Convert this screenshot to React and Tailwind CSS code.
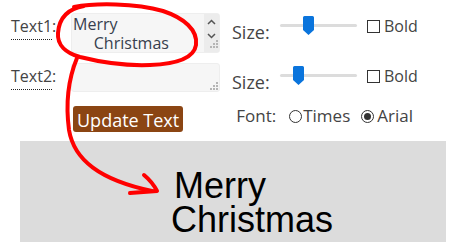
const Grip = () => (
  <svg width="8" height="8" viewBox="0 0 8 8" className="block">
    {[
      [6, 0],
      [3, 3],
      [6, 3],
      [0, 6],
      [3, 6],
      [6, 6],
    ].map(([x, y], i) => (
      <rect key={i} x={x} y={y} width="2" height="2" fill="#b5b5b5" />
    ))}
  </svg>
);

const Slider = ({ pos }) => (
  <div className="relative mt-[3px] h-[19px] w-[77px]">
    <div className="absolute left-0 right-0 top-[8px] h-[3px] rounded-full bg-[#dcdcdc]" />
    <svg
      width="11"
      height="19"
      viewBox="0 0 11 19"
      className="absolute top-0"
      style={{ left: pos }}
    >
      <path d="M1.5 0h8a1.5 1.5 0 0 1 1.5 1.5V14l-5.5 5L0 14V1.5A1.5 1.5 0 0 1 1.5 0z" fill="#0a74dc" />
    </svg>
  </div>
);

const Checkbox = () => (
  <div className="mt-[2px] ml-[10px] flex items-center leading-[22px] text-[16px]">
    <span className="h-[13px] w-[13px] border border-[#333] bg-white" />
    <span className="ml-[4px]">Bold</span>
  </div>
);

const Label = ({ children }) => (
  <div className="mt-[2px] w-[60px] ml-[11px] text-[16px] leading-[22px]">
    <span className="inline-block border-b border-dotted border-[#222] pb-[2px] leading-[22px]">{children}</span>:
  </div>
);

const Radio = ({ checked }) => (
  <span className="flex h-[13px] w-[13px] items-center justify-center rounded-full border border-[#333] bg-white">
    {checked && <span className="h-[7px] w-[7px] rounded-full bg-[#333]" />}
  </span>
);

export default function App() {
  return (
    <div className="relative h-[242px] w-[470px] overflow-hidden bg-white font-['Open_Sans',sans-serif] text-[#444]">
      <div className="flex h-[63px] items-start pt-[13px]">
        <Label>Text1</Label>
        <div className="flex h-[40px] w-[149px] rounded-[3px] border border-[#eeeeee] bg-[#f6f6f6]">
          <textarea
            readOnly
            value={"Merry\n     Christmas"}
            className="h-full flex-1 resize-none overflow-hidden bg-transparent pl-[1px] pt-[1px] text-[16px] leading-[19px] text-[#37404e] outline-none"
          />
          <div className="flex w-[15px] flex-col items-center bg-[#ececec] pt-[5px] text-[#555]">
            <svg width="9" height="6" viewBox="0 0 9 6">
              <path d="M1 5l3.5-3.5L8 5" fill="none" stroke="#555" strokeWidth="1.5" />
            </svg>
            <svg width="9" height="6" viewBox="0 0 9 6" className="mt-[8px]">
              <path d="M1 1l3.5 3.5L8 1" fill="none" stroke="#555" strokeWidth="1.5" />
            </svg>
            <div className="mt-[1px] self-end pr-[1px]">
              <Grip />
            </div>
          </div>
        </div>
        <div className="ml-[12px] mt-[7px] w-[48px] text-[18px] leading-[24px]">Size:</div>
        <Slider pos={23} />
        <Checkbox />
      </div>

      <div className="flex h-[41px] items-start">
        <Label>Text2</Label>
        <div className="flex h-[29px] w-[149px] items-end justify-end rounded-[3px] border border-[#eeeeee] bg-[#f6f6f6] p-[1px]">
          <Grip />
        </div>
        <div className="ml-[12px] mt-[7px] w-[48px] text-[18px] leading-[24px]">Size:</div>
        <Slider pos={13} />
        <Checkbox />
      </div>

      <div className="flex h-[37px] items-start">
        <button className="ml-[73px] mt-[2px] flex h-[26px] items-center rounded-[3px] bg-[#8b4513] px-[4px] pt-[2px] text-[18px] leading-[24px] text-white">
          Update Text
        </button>
        <div className="ml-[53px] flex items-center text-[17px] leading-[24px]">
          <span className="w-[53px]">Font:</span>
          <Radio />
          <span className="ml-[1px]">Times</span>
          <span className="ml-[11px]">
            <Radio checked />
          </span>
          <span className="ml-[3px]">Arial</span>
        </div>
      </div>

      <div className="ml-[20px] h-[101px] w-[426px] bg-[#dcdcdc] pl-[151px] pt-[28px] font-['Liberation_Sans',Arial,sans-serif] text-[36px] leading-[34px] text-black">
        <div className="pl-[3px]">Merry</div>
        <div>Christmas</div>
      </div>

      <svg
        width="470"
        height="242"
        viewBox="0 0 470 242"
        className="pointer-events-none absolute left-0 top-0"
        fill="none"
        stroke="#ff0000"
        strokeWidth="4"
        strokeLinecap="round"
        strokeLinejoin="round"
      >
        <path d="M74 7C95 3 135 3 163 11C184 18 198 30 196 45C194 58 176 64 150 65C125 66 100 62 80 57C66 53 57 45 58 33C59 20 66 9 84 6" />
        <path d="M77 58C70 75 65 100 69 130C74 160 100 180 152 191" />
        <path d="M130 193L157 191M144 175C150 180 154 185 157 191" />
      </svg>
    </div>
  );
}
